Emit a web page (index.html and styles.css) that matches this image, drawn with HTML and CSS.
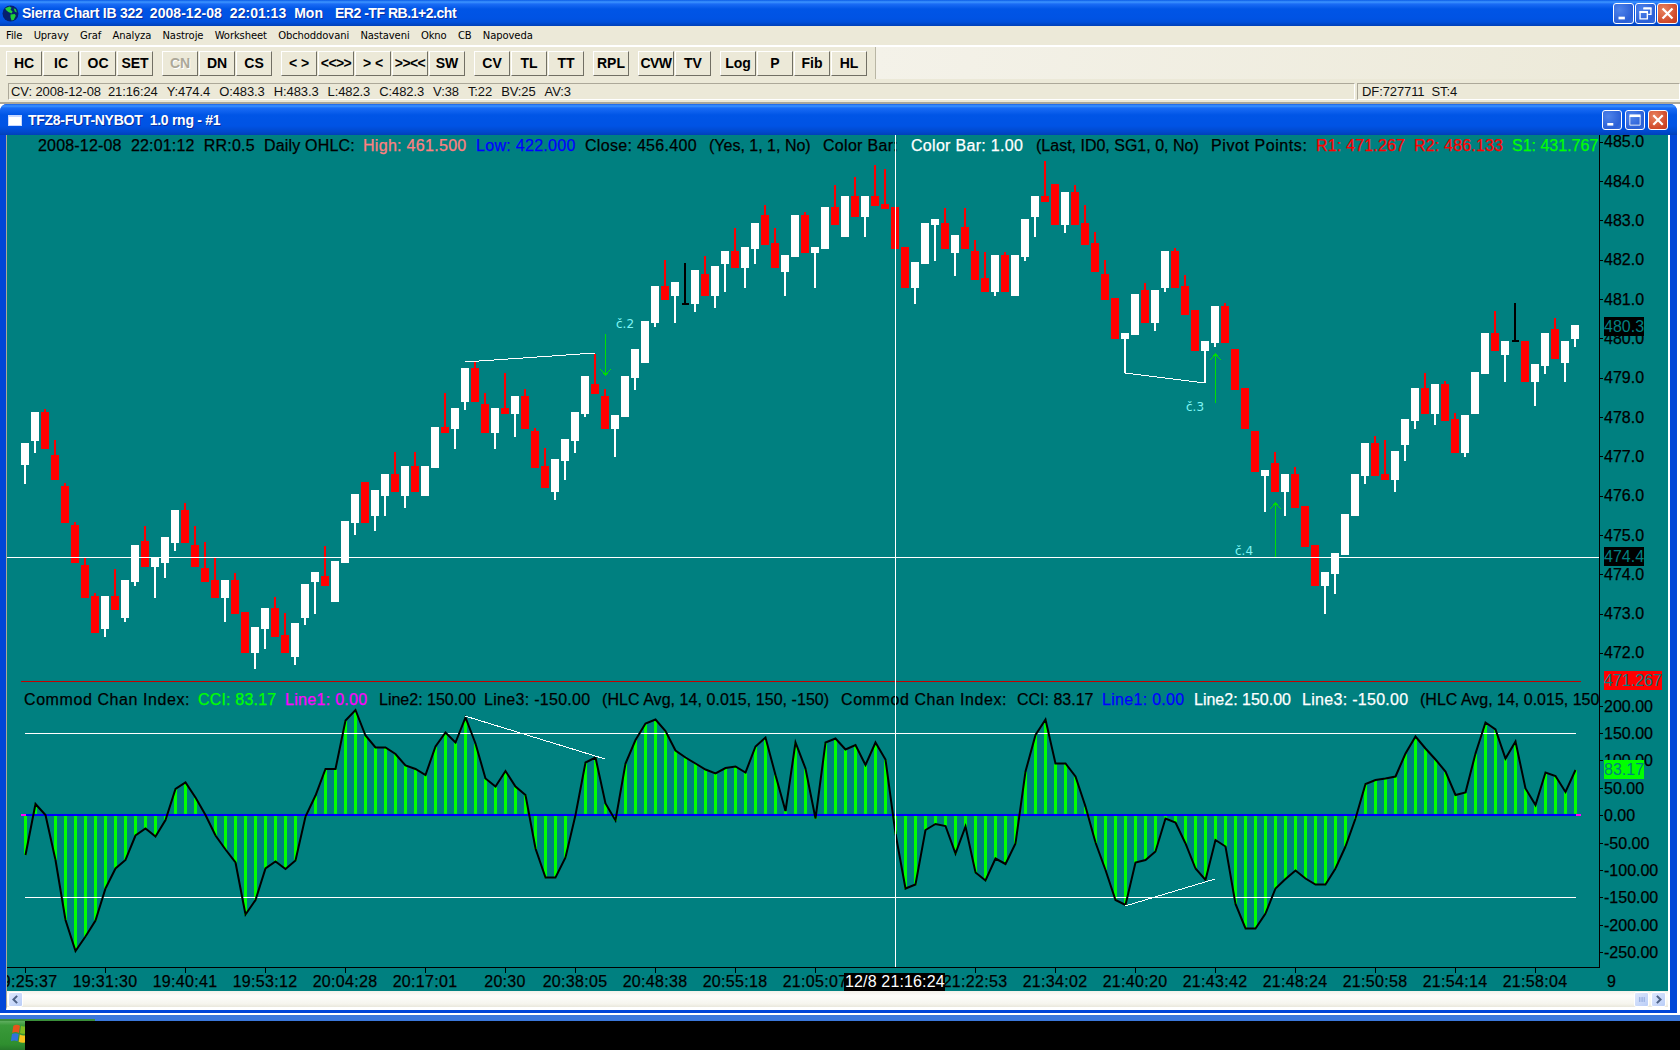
FILE: index.html
```html
<!DOCTYPE html>
<html lang="cs">
<head>
<meta charset="utf-8">
<title>Sierra Chart</title>
<link rel="stylesheet" href="styles.css">
</head>
<body>
<div class="screen">
  <header class="app-title">
    <svg class="globe" viewBox="0 0 16 16"><circle cx="8" cy="8" r="7.5" fill="#06206e"/><path d="M3 3l4-1.5 2 1-1 2 2 1.500-1 2-3-1.500-2-1.500zM8 9l4-.5 1 1.500-2 4-2 .5-1-3zM11 3l2 1 1 3-2-1z" fill="#1fd03a"/></svg>
    <span class="app-title-text"><span class="tt-a">Sierra Chart IB 322&nbsp; </span><span class="tt-b">2008-12-08&nbsp; 22:01:13&nbsp; Mon&nbsp;&nbsp; </span><span class="tt-c">ER2 -TF RB.1+2.cht</span></span>
    <div class="win-btns">
      <span class="win-btn"><svg viewBox="0 0 21 21"><rect x="5" y="14" width="7" height="3" fill="#fff"/></svg></span>
      <span class="win-btn"><svg viewBox="0 0 21 21"><path d="M8.500 4.500h8v7h-3M4.500 8.500h8v8h-8z" fill="none" stroke="#fff" stroke-width="1.500"/><path d="M8 4h9v2H8zM4 8h9v2H4z" fill="#fff"/></svg></span>
      <span class="win-btn win-close"><svg viewBox="0 0 21 21"><path d="M5 5l11 11M16 5L5 16" stroke="#fff" stroke-width="2.500"/></svg></span>
    </div>
  </header>
  <nav class="menubar">
    <span>File</span><span>Upravy</span><span>Graf</span><span>Analyza</span><span>Nastroje</span><span>Worksheet</span><span>Obchoddovani</span><span>Nastaveni</span><span>Okno</span><span>CB</span><span>Napoveda</span>
  </nav>
  <div class="toolbar">
    <div class="tb-buttons">
      <div class="tb-group"><button class="tb">HC</button><button class="tb">IC</button><button class="tb">OC</button><button class="tb">SET</button></div>
      <div class="tb-group"><button class="tb tb-off">CN</button><button class="tb">DN</button><button class="tb">CS</button></div>
      <div class="tb-group"><button class="tb">&lt; &gt;</button><button class="tb tb-tight">&lt;&lt;&gt;&gt;</button><button class="tb">&gt; &lt;</button><button class="tb tb-tight">&gt;&gt;&lt;&lt;</button><button class="tb">SW</button></div>
      <div class="tb-group"><button class="tb">CV</button><button class="tb">TL</button><button class="tb">TT</button></div>
      <div class="tb-group"><button class="tb">RPL</button></div>
      <div class="tb-group"><button class="tb tb-tight">CVW</button><button class="tb">TV</button></div>
      <div class="tb-group"><button class="tb">Log</button><button class="tb">P</button><button class="tb">Fib</button><button class="tb">HL</button></div>
    </div>
    <div class="tb-rest"></div>
  </div>
  <div class="statusbar">
    <div class="st-panel st-main"><span>CV: 2008-12-08&nbsp; 21:16:24</span><span>Y:474.4</span><span>O:483.3</span><span>H:483.3</span><span>L:482.3</span><span>C:482.3</span><span>V:38</span><span>T:22</span><span>BV:25</span><span>AV:3</span></div>
    <div class="st-panel st-side"><span>DF:727711&nbsp; ST:4</span></div>
  </div>
  <main class="mdi">
    <section class="child">
      <div class="child-title">
        <span class="child-icon"></span>
        <span class="child-title-text">TFZ8-FUT-NYBOT&nbsp; 1.0 rng - #1</span>
        <div class="win-btns child-btns">
          <span class="win-btn"><svg viewBox="0 0 21 21"><rect x="5" y="14" width="7" height="3" fill="#fff"/></svg></span>
          <span class="win-btn"><svg viewBox="0 0 21 21"><path d="M4.500 6.500h12v10h-12z" fill="none" stroke="#fff"/><rect x="4" y="4" width="13" height="3" fill="#fff"/></svg></span>
          <span class="win-btn win-close"><svg viewBox="0 0 21 21"><path d="M5 5l11 11M16 5L5 16" stroke="#fff" stroke-width="2.500"/></svg></span>
        </div>
      </div>
      <div class="child-body">
        <svg class="chart" width="1661" height="856" viewBox="7 135 1661 856">
          <defs><clipPath id="plot"><rect x="7" y="135" width="1592" height="832"/></clipPath></defs>

          <path id="wicks-red" class="fill-red"/>
          <path id="wicks-white" class="fill-white"/>
          <path class="fill-black" d="M684 263h2v40h3v2h-7v-2h2zM1514 303h2v37h3v2h-7v-2h2z"/>

          <path class="ln-white" d="M465 362L595 353M1125 373L1205 383"/>
          <path class="arrow" d="M605.500 334V375M600 369L605.500 375 611 369M1215.500 403V354M1210 360L1215.500 354 1221 360M1275.500 557V503M1270 509L1275.500 503 1281 509"/>
          <text class="note" x="616" y="328">č.2</text>
          <text class="note" x="1186" y="411">č.3</text>
          <text class="note" x="1235" y="555">č.4</text>

          <g class="legend">
            <text x="38" y="151" class="sp-s">2008-12-08&#160; 22:01:12&#160; RR:0.5&#160; Daily OHLC:</text>
            <text x="363" y="151" class="c-salmon sp-m">High: 461.500</text>
            <text x="476" y="151" class="c-blue sp-m">Low: 422.000</text>
            <text x="585" y="151" class="sp-m">Close: 456.400</text>
            <text x="709" y="151">(Yes, 1, 1, No)</text>
            <text x="823" y="151" class="sp-m">Color Bar:</text>
            <text x="911" y="151" class="c-white sp-m">Color Bar: 1.00</text>
            <text x="1036" y="151">(Last, ID0, SG1, 0, No)</text>
            <text x="1211" y="151" class="sp-l">Pivot Points:</text>
            <text x="1316" y="151" class="c-red sp-s">R1: 471.267</text>
            <text x="1414" y="151" class="c-red sp-s">R2: 486.133</text>
            <text x="1512" y="151" class="c-green">S1: 431.767</text>

            <g clip-path="url(#plot)">
              <text x="24" y="705" class="sp-l">Commod Chan Index:</text>
              <text x="198" y="705" class="c-green sp-s">CCI: 83.17</text>
              <text x="285" y="705" class="c-magenta sp-m">Line1: 0.00</text>
              <text x="379" y="705">Line2: 150.00</text>
              <text x="484" y="705" class="sp-m">Line3: -150.00</text>
              <text x="602" y="705" class="sp-xs">(HLC Avg, 14, 0.015, 150, -150)</text>
              <text x="841" y="705" class="sp-l">Commod Chan Index:</text>
              <text x="1017" y="705">CCI: 83.17</text>
              <text x="1102" y="705" class="c-blue sp-m">Line1: 0.00</text>
              <text x="1194" y="705" class="c-white">Line2: 150.00</text>
              <text x="1302" y="705" class="c-white sp-m">Line3: -150.00</text>
              <text x="1420" y="705">(HLC Avg, 14, 0.015, 150, -150)</text>
            </g>
          </g>

          <path class="ln-red" d="M21 681.500H1581"/>
          <path id="bars" class="fill-green"/>
          <path class="ln-white" d="M25 733.500H1576M25 897.500H1576"/>
          <path class="ln-blue" d="M21 815H1581"/>
          <path class="ln-magenta" d="M21 815H26M1576 815H1581"/>
          <path id="cci" class="ln-cci"/>
          <path class="ln-white" d="M465 716L605 759M1125 906L1215 879"/>

          <path id="candles-red" class="fill-red"/>
          <path id="candles-white" class="fill-white"/>

          <path class="ln-white" d="M7 557.500H1599M895.500 135V967"/>

          <path class="ln-axis" d="M1599.500 135V967.500H7M1599 142h4M1599 181h4M1599 220h4M1599 260h4M1599 299h4M1599 338h4M1599 378h4M1599 417h4M1599 456h4M1599 496h4M1599 535h4M1599 574h4M1599 614h4M1599 653h4M1599 706h4M1599 733h4M1599 760h4M1599 788h4M1599 815h4M1599 843h4M1599 870h4M1599 897h4M1599 925h4M1599 952h4M25.500 967v6M105.500 967v6M185.500 967v6M265.500 967v6M345.500 967v6M425.500 967v6M505.500 967v6M575.500 967v6M655.500 967v6M735.500 967v6M815.500 967v6M975.500 967v6M1055.500 967v6M1135.500 967v6M1215.500 967v6M1295.500 967v6M1375.500 967v6M1455.500 967v6M1535.500 967v6"/>

          <g class="axis">
            <text x="1604" y="147">485.0</text><text x="1604" y="187">484.0</text><text x="1604" y="226">483.0</text><text x="1604" y="265">482.0</text><text x="1604" y="305">481.0</text><text x="1604" y="344">480.0</text><text x="1604" y="383">479.0</text><text x="1604" y="423">478.0</text><text x="1604" y="462">477.0</text><text x="1604" y="501">476.0</text><text x="1604" y="541">475.0</text><text x="1604" y="580">474.0</text><text x="1604" y="619">473.0</text><text x="1604" y="658">472.0</text>
            <text x="1604" y="712">200.00</text><text x="1604" y="739">150.00</text><text x="1604" y="766">100.00</text><text x="1604" y="794">50.00</text><text x="1604" y="821">0.00</text><text x="1604" y="849">-50.00</text><text x="1604" y="876">-100.00</text><text x="1604" y="903">-150.00</text><text x="1604" y="931">-200.00</text><text x="1604" y="958">-250.00</text>
            <g class="centered">
              <text x="25" y="987">19:25:37</text><text x="105" y="987">19:31:30</text><text x="185" y="987">19:40:41</text><text x="265" y="987">19:53:12</text><text x="345" y="987">20:04:28</text><text x="425" y="987">20:17:01</text><text x="505" y="987">20:30</text><text x="575" y="987">20:38:05</text><text x="655" y="987">20:48:38</text><text x="735" y="987">20:55:18</text><text x="815" y="987">21:05:07</text><text x="975" y="987">21:22:53</text><text x="1055" y="987">21:34:02</text><text x="1135" y="987">21:40:20</text><text x="1215" y="987">21:43:42</text><text x="1295" y="987">21:48:24</text><text x="1375" y="987">21:50:58</text><text x="1455" y="987">21:54:14</text><text x="1535" y="987">21:58:04</text>
            </g>
            <text x="1607" y="987">9</text>
          </g>

          <rect class="fill-black" x="1604" y="317" width="40" height="19"/>
          <text class="badge" x="1604" y="332">480.3</text>
          <rect class="fill-black" x="1604" y="547" width="40" height="19"/>
          <text class="badge" x="1604" y="562">474.4</text>
          <rect class="fill-pure-red" x="1604" y="671" width="58" height="19"/>
          <text class="badge" x="1604" y="686">471.267</text>
          <rect class="fill-green" x="1604" y="760" width="40" height="19"/>
          <text class="badge" x="1604" y="775">83.17</text>
          <rect class="fill-black" x="844" y="973" width="101" height="18"/>
          <text class="badge-time" x="845" y="987">12/8 21:16:24</text>
        </svg>
        <div class="scrollbar">
          <span class="sb-btn"><svg viewBox="0 0 16 16"><path d="M10 3.500L5.500 8l4.500 4.500" fill="none" stroke="#4d6185" stroke-width="2.500"/></svg></span>
          <span class="sb-track"></span>
          <span class="sb-btn sb-thumb"><svg viewBox="0 0 16 16"><path d="M5.500 5v6M7.500 5v6M9.500 5v6M11.500 5v6" stroke="#8ea6dd"/></svg></span>
          <span class="sb-btn"><svg viewBox="0 0 16 16"><path d="M6 3.500L10.500 8 6 12.500" fill="none" stroke="#4d6185" stroke-width="2.500"/></svg></span>
        </div>
      </div>
    </section>
  </main>
  <footer class="taskbar">
    <div class="tb-strip"><span class="tb-strip-green"></span></div>
    <div class="tb-black">
      <span class="start">
        <svg class="flag" viewBox="0 0 18 18"><path d="M3 1.500c2-1 4-1 6 0L8 8C6 7 4 7 2 8z" fill="#e8541a"/><path d="M10 1.500c2 1 4 1 6 .5l-1 6.500c-2 .5-4 .5-6-.5z" fill="#7dbb22"/><path d="M1.800 9c2-1 4-1 6 0l-1 6.500c-2-1-4-1-6 0z" fill="#3272dc"/><path d="M8.800 9.500c2 1 4 1 6 .5l-1 6.500c-2 .5-4 .5-6-.5z" fill="#f6c21c"/></svg>
      </span>
    </div>
  </footer>
</div>
<script src="chart.js"></script>
</body>
</html>
```

FILE: styles.css
```css
html, body { margin: 0; padding: 0; background: #000; }
.screen { width: 1680px; height: 1050px; display: flex; flex-direction: column; overflow: hidden; background: #fff; font-family: "Liberation Sans", Arial, sans-serif; }

.app-title { height: 26px; flex: none; display: flex; align-items: center; padding: 0 2px; box-sizing: border-box; background: linear-gradient(180deg, #0a5be6 0, #3d95ff 2px, #1a6cf5 4px, #0055e6 9px, #0053e4 18px, #0050dc 22px, #0040b8 26px); }
.globe { width: 17px; height: 17px; flex: none; margin-right: 3px; }
.app-title-text { color: #fff; font-size: 14px; font-weight: 700; white-space: nowrap; flex: 1; text-shadow: 1px 1px 0 #0a2fa0; }
.tt-a { letter-spacing: -.25px; }
.tt-b { letter-spacing: .05px; }
.tt-c { letter-spacing: -.46px; }
.win-btns { display: flex; gap: 1px; flex: none; }
.win-btn { width: 21px; height: 21px; box-sizing: border-box; border: 1px solid #fff; border-radius: 3px; background: radial-gradient(circle at 30% 30%, #4f83ea, #2a5fd6 70%, #3a6fe0); display: block; }
.win-btn svg { display: block; width: 19px; height: 19px; }
.win-close { background: radial-gradient(circle at 30% 30%, #e8835f, #d0492a 70%, #c23a1e); }

.menubar { height: 20px; flex: none; display: flex; align-items: center; gap: 11.3px; padding-left: 6px; box-sizing: border-box; background: #ece9d8; border-bottom: 1px solid #fff; font-family: "DejaVu Sans", sans-serif; font-size: 10px; letter-spacing: -.1px; color: #000; margin-bottom: 1px; }

.toolbar { height: 32px; flex: none; display: flex; background: #ece9d8; }
.tb-buttons { display: flex; gap: 9px; padding: 4px 8px 0 6px; width: 861px; box-sizing: content-box; border-right: 1px solid #b9b6a4; box-shadow: 1px 0 0 #fff; }
.tb-group { display: flex; gap: 1px; }
.tb { width: 36px; height: 25px; padding: 0 0 2px; box-sizing: border-box; background: #ece9d8; border: 1px solid; border-color: #fff #716f64 #716f64 #fff; font-family: "Liberation Sans", sans-serif; font-weight: 700; font-size: 14px; color: #000; white-space: nowrap; overflow: hidden; }
.tb-tight { letter-spacing: -.6px; }
.tb-off { color: #aca899; text-shadow: 1px 1px 0 #fff; }
.tb-rest { flex: 1; background: linear-gradient(100deg, #f4f2e9 0, #ece9d8 100%); }

.statusbar { flex: none; display: flex; gap: 2px; padding: 4px 0 0 8px; height: 19px; background: #ece9d8; border-bottom: 2px solid #aca899; }
.st-panel { display: flex; align-items: center; box-sizing: border-box; height: 17px; border: 1px solid; border-color: #aca899 #fff #fff #aca899; font-size: 13px; letter-spacing: -.1px; color: #111; white-space: nowrap; }
.st-main { flex: 1; padding-left: 2px; gap: 9px; }
.st-side { width: 323px; padding-left: 4px; }

.mdi { flex: none; height: 911px; padding-right: 3px; background: #fff; }
.child { height: 909px; background: #0046d8; border-radius: 7px 7px 0 0; display: flex; flex-direction: column; }
.child-title { height: 31px; flex: none; display: flex; align-items: center; padding: 1px 9px 0 8px; box-sizing: border-box; background: linear-gradient(180deg, #1a62e8 0, #3d95ff 2px, #1a6cf5 4px, #0055e6 11px, #0053e4 22px, #0048cc 28px, #0040b8 31px); border-radius: 7px 7px 0 0; }
.child-icon { width: 14px; height: 11px; flex: none; margin-right: 6px; background: #fff; border: 1px solid #c8d8ff; box-sizing: border-box; border-top-width: 2px; }
.child-title-text { color: #fff; font-size: 14px; font-weight: 700; letter-spacing: -.27px; flex: 1; white-space: nowrap; text-shadow: 1px 1px 0 #0a2fa0; }
.child-btns { gap: 3px; }
.child-btns .win-btn { width: 20px; height: 20px; }
.child-btns .win-btn svg { width: 18px; height: 18px; }
.child-body { margin: 0 7px 0 6px; flex: none; height: 875px; box-sizing: border-box; border-left: 1px solid #aca899; border-right: 2px solid #fff; border-bottom: 3px solid #fff; background: #fff; }
.chart { display: block; background: #008080; }

.scrollbar { height: 16px; display: flex; align-items: center; background: linear-gradient(180deg, #f3f1ea 0, #fdfdfb 30%, #f6f5ee 80%, #e9e7dc 100%); padding: 0 1px; }
.sb-btn { width: 15px; height: 15px; flex: none; margin-right: 1px; box-sizing: border-box; border: 1px solid #fff; border-radius: 2px; background: linear-gradient(135deg, #dde7fd, #b9cdf7); display: block; }
.sb-btn svg { display: block; width: 13px; height: 13px; }
.sb-track { flex: 1; }
.sb-thumb { margin-right: 2px; }

.taskbar { height: 35px; flex: none; display: flex; flex-direction: column; }
.tb-strip { height: 6px; flex: none; background: #3b78dc; position: relative; }
.tb-strip-green { position: absolute; left: 0; top: 4px; width: 95px; height: 2px; background: #3a8f3a; }
.tb-black { flex: 1; background: #000; }
.start { display: block; width: 25px; height: 29px; overflow: hidden; background: linear-gradient(180deg, #5fae5f 0, #3a9a3a 15%, #2f8f2f 80%, #26782a 100%); position: relative; }
.flag { position: absolute; left: 10px; top: 3px; width: 20px; height: 20px; }

.fill-red { fill: #ff0000; shape-rendering: crispEdges; }
.fill-pure-red { fill: #ff0000; }
.fill-white { fill: #ffffff; shape-rendering: crispEdges; }
.fill-black { fill: #000000; shape-rendering: crispEdges; }
.fill-green { fill: #00ff00; shape-rendering: crispEdges; }
.ln-white { stroke: #fff; stroke-width: 1; fill: none; shape-rendering: crispEdges; }
.ln-red { stroke: #c40000; stroke-width: 1; fill: none; shape-rendering: crispEdges; }
.ln-blue { stroke: #0000ff; stroke-width: 2; fill: none; shape-rendering: crispEdges; }
.ln-magenta { stroke: #ff00ff; stroke-width: 2; fill: none; shape-rendering: crispEdges; }
.ln-cci { stroke: #000; stroke-width: 2; fill: none; stroke-linejoin: miter; }
.ln-axis { stroke: #000; stroke-width: 1; fill: none; shape-rendering: crispEdges; }
.arrow { stroke: #00e000; stroke-width: 1; fill: none; shape-rendering: crispEdges; }
.note { fill: #7ff5f5; font-family: "DejaVu Sans", sans-serif; font-size: 12px; }

.legend text, .axis text { font-family: "Liberation Sans", Arial, sans-serif; font-size: 16px; color: #000; fill: currentColor; stroke: currentColor; stroke-width: .25px; white-space: pre; }
.centered text { text-anchor: middle; letter-spacing: .3px; }
.legend .c-salmon { color: #ff8080; }
.legend .c-blue { color: #0000ff; }
.legend .c-white { color: #fff; }
.legend .c-red { color: #ff0000; }
.legend .c-green { color: #00ff00; }
.legend .c-magenta { color: #ff00ff; }
.sp-xs { letter-spacing: .05px; }
.sp-s { letter-spacing: .18px; }
.sp-m { letter-spacing: .3px; }
.sp-l { letter-spacing: .58px; }
.badge { font-family: "Liberation Sans", Arial, sans-serif; font-size: 16px; fill: #008080; }
.badge-time { font-family: "Liberation Sans", Arial, sans-serif; font-size: 16px; letter-spacing: .15px; fill: #fff; }
```

FILE: chart.js
```js
// Candles read as [kind, top, bottom, wickEnd]. r = red (wick up), w = white (wick down), each 10px apart.
var A = { y0: 380, x: 25, d: [
['w',189,255,312],['w',96,183,219],['r',96,207,88],['r',226,300,180],['r',318,430,310],['r',436,549,427],['r',556,654,534],['r',648,760,640],
['w',648,747,771],['r',648,690,568],['w',600,714,726],['w',495,606,618],['r',484,561,438],['w',533,561,654],['w',471,549,594],['w',390,489,513],
['r',390,489,370],['r',495,561,438],['r',564,606,486],['r',600,654,534],['w',600,654,726],['r',600,702,580],['r',696,820],['w',741,819,867],
['w',684,747,807],['r',684,772,652],['r',766,820,700],['w',729,831,855],['w',612,714,735],['w',576,606,702],['r',588,618,498],['w',543,666],
['w',423,549],['w',342,429,465],['r',306,430],['w',330,408,453],['w',282,348,408],['r',282,336,216],['w',258,348,384],['r',258,336,216]
]};
var B = { y0: 140, x: 425, d: [
['w',978,1068],['w',861,984],['r',861,880,760],['w',804,867,927],['w',684,786,810],['r',684,786,666],['r',792,880,760],['w',804,879,927],
['r',804,822,700],['w',768,822,891],['r',768,868,748],['r',874,984,865],['r',978,1044,924],['w',957,1056,1080],['w',897,963,1020],['w',816,903,939],
['w',708,822,831],['r',732,762,642],['r',768,867,748],['w',825,867,951],['w',708,831],['w',627,714,750],['w',543,669],['w',438,549,561],
['r',438,480,360],['w',426,468,549],null,['w',390,492,516],['r',402,468,348],['w',378,468,504],['w',333,372,456],['r',333,384,264],
['w',321,384,444],['w',249,327,372],['r',225,315,195],['r',309,384,264],['w',345,396,468],['w',225,351],['r',225,339,216],['w',321,339,444],
['w',201,327],['r',201,255,135],['w',168,291],['r',168,231,111],['w',168,231,291],['r',168,198,75],['r',192,207,87],['r',201,327],
['r',321,444],['w',366,444,492],['w',249,372],['w',237,255,363],['r',249,327,204],['w',285,339,408],['r',261,327,204],['r',333,420,300],
['r',414,456,336],['w',345,456,468],['r',345,456,336],['w',345,468],['w',237,351,363],['w',168,231,291],['r',168,186,64],['r',132,255],
['w',156,255,279],['r',156,255,135],['r',249,315,195],['r',309,396,276],['r',402,480,360],['r',474,597],['w',579,597,700],['w',462,585],
['r',450,549,430],['w',450,549,573],['w',333,444,456],['r',333,444,324],['r',438,525,405],['r',510,633],['w',603,633,730],['w',498,609,621],
['r',498,609,490],['r',628,750],['r',744,867],['r',874,996],['w',990,1008,1116],['r',970,1056,936],['w',1002,1056,1128],['r',1002,1104,982],
['r',1098,1221],['r',1216,1338],['w',1296,1338,1422],['w',1239,1302,1362],['w',1122,1245],['w',1002,1128],['w',909,1008,1032],['r',909,1008,888],
['r',1002,1020,900],['w',933,1020,1056],['w',837,915,963],['w',744,843,867],['r',744,822,700],['w',732,822,855],['r',732,844,724],['r',837,939,820],
['w',825,939,951],['w',696,822],['w',579,702],['r',579,633,514],['w',603,645,726],null,['r',603,726],['w',672,726,798],
['w',579,678,702],['r',567,657,534],['w',603,669,726],['w',555,597,621]
]};

var CCI = [
 { y0: 670, x: 25, v: [555,402,435,570,750,843,800,752,655,595,570,497,476,500,450,357,337,383,435,497,538,578,733,690,595,575,597,572,440,377,297,297,152,120,197,233,233,252,286,297,315,230,187,218,143,220,325,350,303,350,375,535,623,623] },
 { y0: 700, x: 565, v: [473,345,188,172,310,362,190,120,70,58,93,152,172,190,208,220,204,199,217,140,113,225,333,128,205,355,128,116,148,135,195,128,178,400,565,553,390,372] },
 { y0: 700, x: 945, v: [378,460,380,518,542,476,492,430,215,105,58,190,190,230,320,427,510,600,615,487,480,455,355,367,430,505,540,420,440,612,686,686,640,565,537,512,535,553] },
 { y0: 640, x: 1325, v: [733,685,620,535,432,420,415,410,340,290,325,358,395,465,458,340,248,268,355,305,445,495,398,408,456,390] }
];

function rect(x, y1, w, y2) {
  return 'M' + x + ' ' + y1 + 'h' + w + 'V' + y2 + 'h' + (-w) + 'z';
}

var paths = { rb: '', wb: '', rw: '', ww: '' };
[A, B].forEach(function (seg) {
  seg.d.forEach(function (c, i) {
    if (!c) return;
    var cx = seg.x + i * 10;
    var top = Math.round(seg.y0 + c[1] / 3), bot = Math.round(seg.y0 + c[2] / 3);
    var body = rect(cx - 4, top, 8, bot);
    if (c[0] === 'r') {
      paths.rb += body;
      if (c[3] !== undefined) paths.rw += rect(cx - 1, Math.round(seg.y0 + c[3] / 3), 2, top);
    } else {
      paths.wb += body;
      if (c[3] !== undefined) paths.ww += rect(cx - 1, bot, 2, Math.round(seg.y0 + c[3] / 3));
    }
  });
});
document.getElementById('candles-red').setAttribute('d', paths.rb);
document.getElementById('candles-white').setAttribute('d', paths.wb);
document.getElementById('wicks-red').setAttribute('d', paths.rw);
document.getElementById('wicks-white').setAttribute('d', paths.ww);

var line = '', bars = '', first = true;
CCI.forEach(function (seg) {
  seg.v.forEach(function (z, i) {
    var cx = seg.x + i * 10, y = Math.round((seg.y0 + z / 3) * 2) / 2;
    line += (first ? 'M' : 'L') + (cx + 0.5) + ' ' + y;
    first = false;
    bars += rect(cx - 1, Math.min(y, 815), 3, Math.max(y, 815));
  });
});
document.getElementById('cci').setAttribute('d', line);
document.getElementById('bars').setAttribute('d', bars);
```
